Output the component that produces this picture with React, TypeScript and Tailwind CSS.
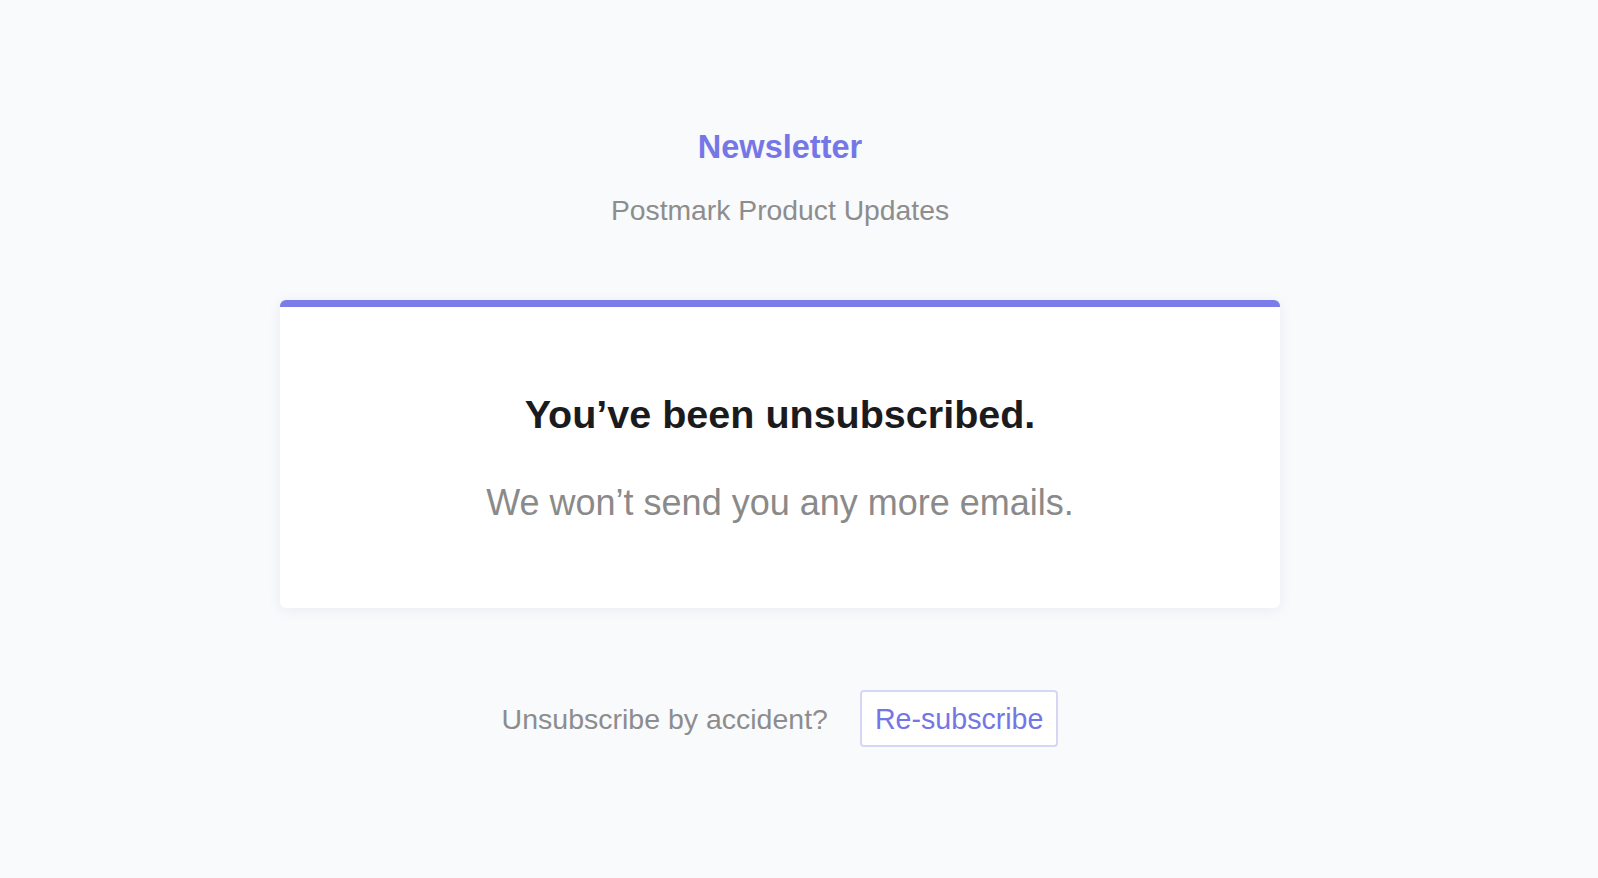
export default function App() {
  return (
    <div
      className="min-h-screen w-full bg-[#f9fafc] flex justify-center pr-[38px]"
      style={{ fontFamily: '"Liberation Sans", Arial, Helvetica, sans-serif' }}
    >
      <div className="flex flex-col items-center pt-[127px] w-[1000px]">
        <h1 className="text-[32.5px] leading-[40px] font-bold text-[#7677e7]">Newsletter</h1>
        <p className="mt-[25px] text-[28.3px] leading-[36px] text-[#8d8d8d]">Postmark Product Updates</p>

        <div className="mt-[72px] w-full h-[308px] bg-white rounded-[6px] border-t-[7px] border-[#7b7ce9] shadow-[0_2px_14px_rgba(30,40,80,0.07)] flex flex-col items-center pt-[83px]">
          <h2 className="text-[39.5px] leading-[48px] font-bold text-[#1b1b1d]">You’ve been unsubscribed.</h2>
          <p className="mt-[43px] text-[36px] leading-[44px] text-[#8a8a8a]">We won’t send you any more emails.</p>
        </div>

        <div className="mt-[82px] flex items-center gap-[32px]">
          <span className="text-[28.5px] leading-[36px] text-[#8d8d8d]">Unsubscribe by accident?</span>
          <button className="h-[57px] px-[13px] rounded-[4px] border-2 border-[#d6d6f7] bg-white text-[28.6px] leading-[36px] text-[#7576e6]">
            Re-subscribe
          </button>
        </div>
      </div>
    </div>
  );
}
